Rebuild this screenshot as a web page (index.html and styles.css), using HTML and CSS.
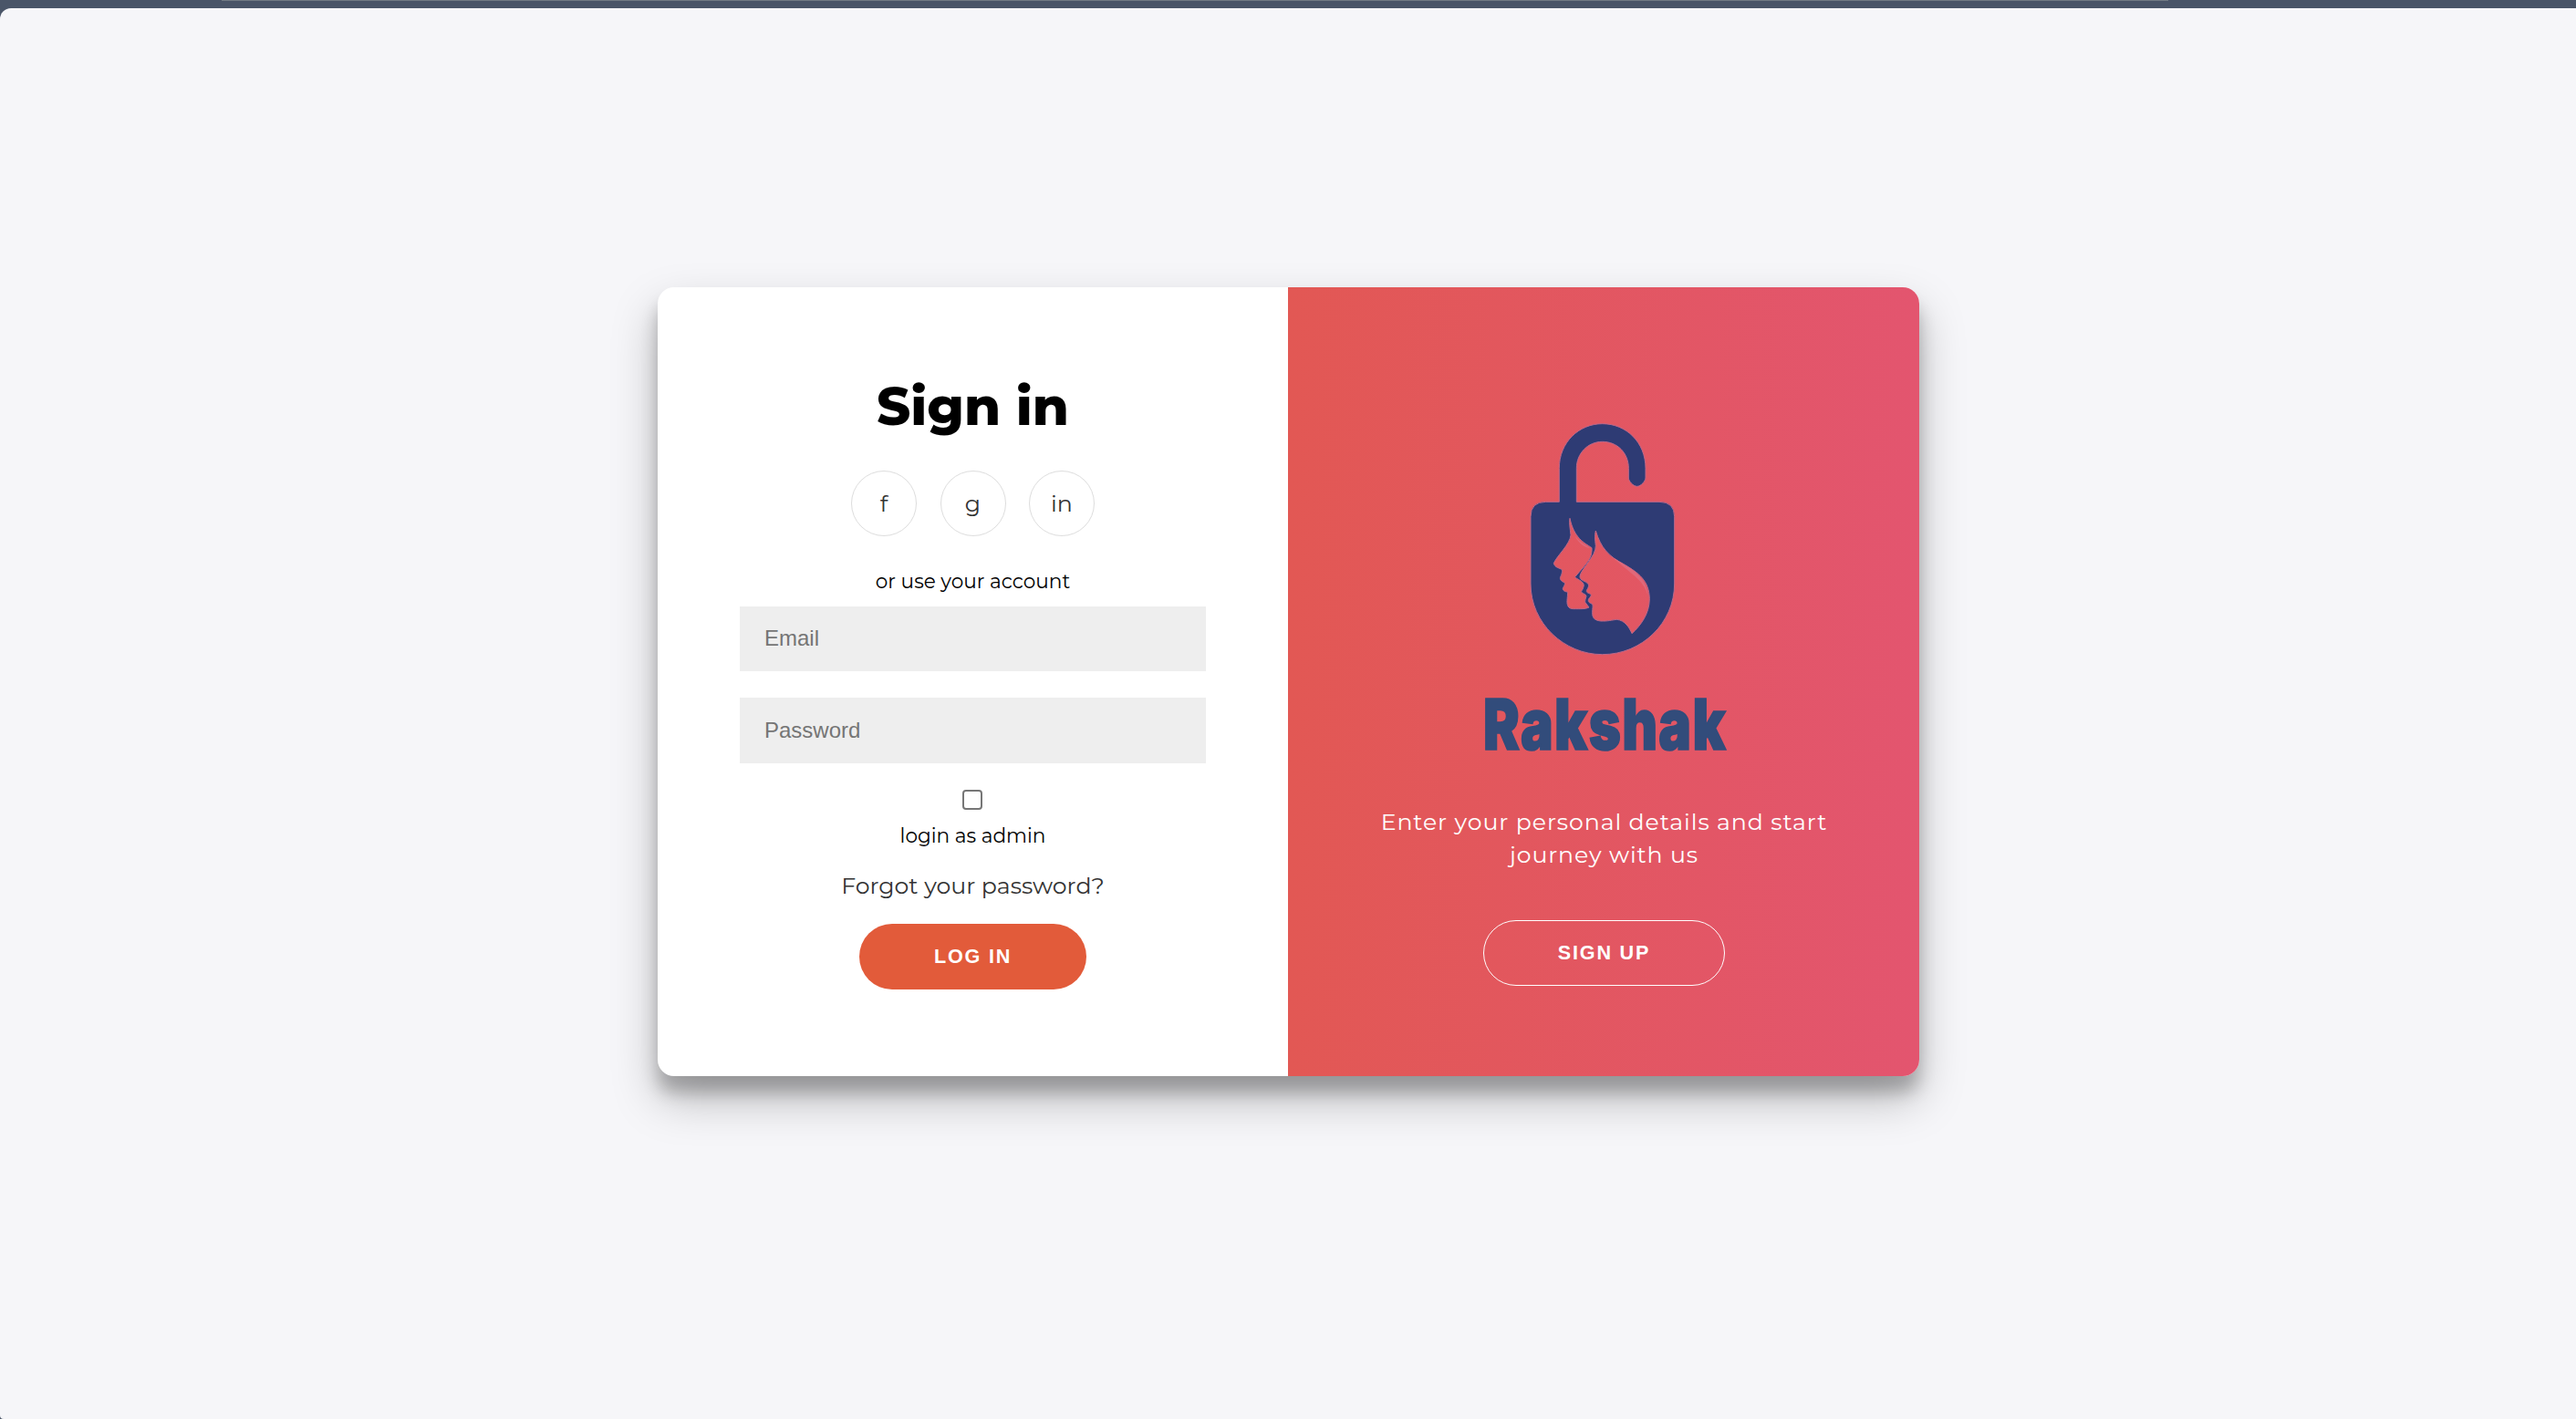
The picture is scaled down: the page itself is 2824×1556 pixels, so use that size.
FILE: index.html
```html
<!DOCTYPE html>
<html lang="en">
<head>
<meta charset="utf-8">
<title>Rakshak - Sign in</title>
<link rel="stylesheet" href="styles.css">
</head>
<body>
<header class="topbar"><div class="topbar-line"></div></header>
<main class="page">
  <div class="card">
    <form class="signin">
      <h1 class="title">Sign in</h1>
      <div class="socials">
        <a class="social">f</a>
        <a class="social">g</a>
        <a class="social">in</a>
      </div>
      <span class="note note-account">or use your account</span>
      <input class="field" type="email" placeholder="Email">
      <input class="field field-password" type="password" placeholder="Password">
      <input class="check" type="checkbox" id="admin">
      <label class="note note-admin" for="admin">login as admin</label>
      <a class="forgot">Forgot your password?</a>
      <button class="btn btn-login" type="button">LOG IN</button>
    </form>
    <section class="welcome">
      <svg class="logo" viewBox="0 0 840 1170" role="img" aria-label="Rakshak">
        <g transform="translate(125 0)">
          <g class="lock">
            <path fill-rule="evenodd" d="M55 350Q55 301 105 301H149V190C149 106 213 44 291 44C370 44 433 106 433 190V222C433 232 418 250 405 250C392 250 377 232 377 222V190C377 140 340 103 291 103C243 103 206 142 206 190V301H478Q528 301 528 350V570C528 700 420 803 291 803C165 803 55 700 55 570Z
            M184 355C198 420 230 435 256 452C258 480 245 495 235 508L201 548C205 555 228 560 230 575C228 590 220 595 222 598C230 605 238 605 238 612C235 620 233 628 235 632L247 648C235 654 220 653 195 653C178 653 174 640 175 625C176 610 178 598 175 597C165 596 158 590 162 583C166 575 170 570 165 566C155 562 150 555 153 548C157 540 160 530 158 524C150 518 135 518 131 503C140 480 185 440 187 410C185 390 181 370 184 355Z
            M269 396C285 450 310 480 365 508C410 535 445 560 446 620C446 670 415 710 388 734C380 715 365 690 338 688C320 690 310 694 285 693C262 690 258 680 258 665C258 650 262 640 256 636C245 632 243 628 246 620C252 614 256 608 252 604C240 600 237 597 240 590C245 583 248 575 243 570C238 562 215 560 217 545C222 520 270 480 269 445C266 425 266 405 269 396Z"/>
          </g>
          <path class="shine" d="M325 484C370 514 435 535 441 610C425 555 385 540 325 484Z"/>
          <path class="shine" d="M200 412C215 432 235 442 251 454C235 452 213 440 200 412Z"/>
        </g>
        <text class="wordmark" x="24" y="1115" textLength="801" lengthAdjust="spacingAndGlyphs">Rakshak</text>
      </svg>
      <p class="lead">Enter your personal details and start<br>journey with us</p>
      <button class="btn btn-signup" type="button">SIGN UP</button>
    </section>
  </div>
</main>
</body>
</html>
```
FILE: styles.css
```css
* { box-sizing: border-box; }
body {
  margin: 0;
  height: 1556px;
  overflow: hidden;
  display: flex;
  flex-direction: column;
  background: #4a5568;
  font-family: Montserrat, Inter, sans-serif;
}
.topbar { height: 9px; flex: none; }
.topbar-line {
  height: 1px;
  width: 2134px;
  margin-left: 243px;
  background: #727b84;
}
.page {
  flex: 1;
  display: flex;
  justify-content: center;
  align-items: flex-start;
  padding: 306px 0 0 1px;
  background: #f6f6f9;
  border-radius: 12px 0 0 4px;
}
.card {
  width: 1383px;
  height: 865px;
  display: flex;
  overflow: hidden;
  border-radius: 18px;
  background: #fff;
  box-shadow: 0 25px 50px rgba(0, 0, 0, .25), 0 18px 18px rgba(0, 0, 0, .22);
}
.signin {
  width: 691px;
  padding: 95px 90px 0;
  display: flex;
  flex-direction: column;
  align-items: center;
}
.title {
  margin: 0;
  font-size: 57.6px;
  font-weight: 800;
  line-height: 70px;
  white-space: nowrap;
  color: #000;
}
.socials { display: flex; gap: 25.5px; margin-top: 36px; }
.social {
  width: 72px;
  height: 72px;
  display: flex;
  justify-content: center;
  align-items: center;
  border: 1px solid #ddd;
  border-radius: 50%;
  font-size: 25.2px;
  font-weight: 400;
  color: #333;
}
.note { font-size: 21.6px; line-height: 26px; color: #000; white-space: nowrap; }
.note-account { margin-top: 36px; }
.note-admin { margin-top: 15px; }
.field {
  width: 100%;
  height: 71px;
  flex: none;
  margin-top: 15px;
  padding: 0 27px 1px;
  border: 0;
  border-radius: 0;
  background: #eee;
  font: 24px "Liberation Sans", Arial, sans-serif;
}
.field::placeholder { color: #757575; }
.field-password { height: 72px; margin-top: 29px; }
.check {
  appearance: none;
  width: 22px;
  height: 22px;
  flex: none;
  margin: 29px 1px 0 0;
  border: 2px solid #767676;
  border-radius: 4px;
}
.forgot {
  margin-top: 27px;
  font-size: 25.2px;
  line-height: 30px;
  font-weight: 400;
  color: #333;
  white-space: nowrap;
}
.btn {
  height: 72px;
  flex: none;
  padding: 0;
  border-radius: 36px;
  color: #fff;
  font: bold 21.6px "Liberation Sans", Arial, sans-serif;
  letter-spacing: 1.8px;
}
.btn-login { width: 249px; margin-top: 27px; border: 0; background: #e25b3a; }
.welcome {
  flex: 1;
  padding-top: 135px;
  display: flex;
  flex-direction: column;
  align-items: center;
  background: linear-gradient(to right, #e25854, #e3556f);
  color: #fff;
}
.logo { width: 280px; height: 390px; flex: none; }
.lock path { fill: #2e3b74; stroke: #b9698c; stroke-width: 3; }
.shine { fill: #e0687a; }
.wordmark {
  fill: #324c7b;
  stroke: #324c7b;
  stroke-width: 5px;
  font-family: Inter, sans-serif;
  font-size: 233px;
  font-weight: 900;
  letter-spacing: 5px;
}
.lead {
  margin: 43px 0 0;
  padding-left: 1px;
  font-size: 25.2px;
  line-height: 36px;
  font-weight: 400;
  letter-spacing: .9px;
  text-align: center;
  white-space: nowrap;
}
.btn-signup { width: 265px; margin-top: 54px; padding-left: 1px; border: 1px solid #fff; background: transparent; }
```
